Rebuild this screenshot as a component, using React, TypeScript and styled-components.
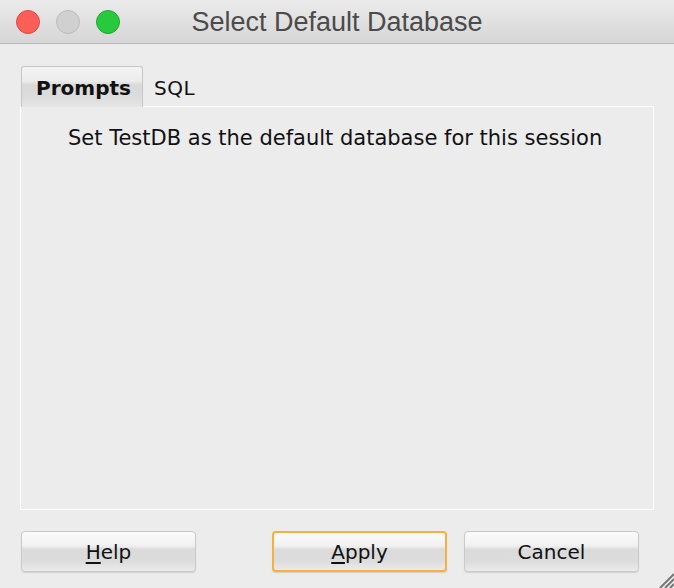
import styled, { createGlobalStyle } from "styled-components";

const GlobalStyle = createGlobalStyle`
  html, body {
    margin: 0;
    padding: 0;
    background: #ececec;
  }
  * {
    box-sizing: border-box;
  }
`;

// whole dialog
const Window = styled.div`
  width: 674px;
  height: 588px;
  background: #ececec;
  display: flex;
  flex-direction: column;
  position: relative;
  overflow: hidden;
  font-family: "DejaVu Sans", "Liberation Sans", sans-serif;
`;

// title bar
const TitleBar = styled.div`
  height: 44px;
  flex-shrink: 0;
  display: grid;
  grid-template-columns: 1fr auto 1fr;
  align-items: center;
  padding-left: 16px;
  background: linear-gradient(#ebebeb, #d6d6d6);
  border-bottom: 1px solid #b9b9b9;
`;

const Lights = styled.div`
  display: flex;
  gap: 16px;
`;

const Light = styled.span<{ $fill: string; $edge: string }>`
  width: 24px;
  height: 24px;
  border-radius: 50%;
  background: ${(p) => p.$fill};
  border: 1px solid ${(p) => p.$edge};
`;

const Title = styled.div`
  font-family: "Liberation Sans", Arial, sans-serif;
  font-size: 27px;
  color: #4b4b4b;
  padding-top: 1px;
  margin-left: -16px;
`;

// content below title
const Body = styled.div`
  flex: 1;
  display: flex;
  flex-direction: column;
  padding: 22px 20px 0 20px;
`;

const TabStrip = styled.div`
  display: flex;
  align-items: flex-end;
  height: 40px;
  padding-left: 1px;
`;

const Tab = styled.div<{ $active?: boolean }>`
  height: ${(p) => (p.$active ? "41px" : "39px")};
  display: flex;
  align-items: center;
  font-size: 20px;
  color: #111;
  ${(p) =>
    p.$active
      ? `
    width: 122px;
    justify-content: center;
    font-weight: bold;
    border: 1px solid #c6c6c6;
    border-bottom: none;
    border-radius: 3px 3px 0 0;
    background: linear-gradient(#f3f3f3 0%, #ececec 35%, #d9d9d9 45%, #dcdcdc 75%, #e6e6e6 100%);
    margin-bottom: -1px;
    position: relative;
    z-index: 1;
    padding-top: 2px;
    padding-left: 3px;
  `
      : `
    padding-left: 11px;
    padding-top: 2px;
    letter-spacing: 0.5px;
  `}
`;

const Panel = styled.div`
  height: 404px;
  border: 1px solid #ffffff;
  padding: 19px 0 0 47px;
  font-size: 21px;
  color: #111;
`;

const ButtonRow = styled.div`
  display: flex;
  padding: 21px 0 0 1px;
`;

const Button = styled.button<{ $default?: boolean; $gap?: number }>`
  width: 175px;
  height: 41px;
  margin-left: ${(p) => p.$gap ?? 0}px;
  font-family: "DejaVu Sans", "Liberation Sans", sans-serif;
  font-size: 20px;
  color: #111;
  border-radius: 4px;
  border: ${(p) => (p.$default ? "2px solid #f5b041" : "1px solid #c9c9c9")};
  background: linear-gradient(#fbfbfb 0%, #f1f1f1 35%, #dbdbdb 45%, #dcdcdc 75%, #ebebeb 100%);
  box-shadow: 0 1px 1px rgba(0, 0, 0, 0.12);
  padding: 0;
  u {
    text-decoration-thickness: 2px;
    text-underline-offset: 3px;
  }
`;

// resize grip in corner
const Grip = styled.svg`
  position: absolute;
  right: 0;
  bottom: 0;
`;

export default function App() {
  return (
    <Window>
      <GlobalStyle />
      <TitleBar>
        <Lights>
          <Light $fill="#fc5f57" $edge="#de4a42" />
          <Light $fill="#d0d0d0" $edge="#bcbcbc" />
          <Light $fill="#28c93f" $edge="#1fa92f" />
        </Lights>
        <Title>Select Default Database</Title>
      </TitleBar>
      <Body>
        <TabStrip>
          <Tab $active>Prompts</Tab>
          <Tab>SQL</Tab>
        </TabStrip>
        <Panel>Set TestDB as the default database for this session</Panel>
        <ButtonRow>
          <Button>
            <u>H</u>elp
          </Button>
          <Button $default $gap={76}>
            <u>A</u>pply
          </Button>
          <Button $gap={17}>Cancel</Button>
        </ButtonRow>
      </Body>
      <Grip width="16" height="16" viewBox="0 0 16 16">
        <path d="M2 16 L16 2 M7 16 L16 7 M12 16 L16 12" stroke="#777" strokeWidth="2" />
      </Grip>
    </Window>
  );
}
